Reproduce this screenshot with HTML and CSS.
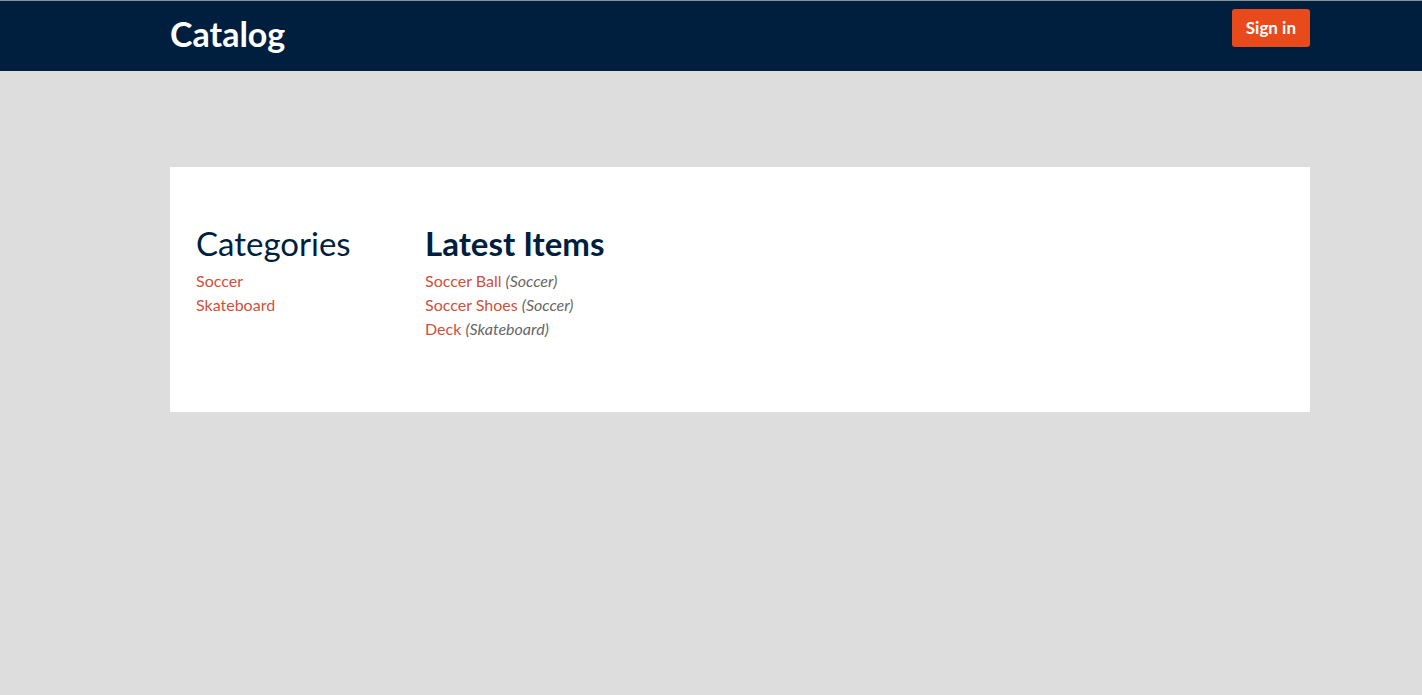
FILE: index.html
```html
<!DOCTYPE html>
<html>
<head>
<meta charset="utf-8">
<link rel="stylesheet" href="styles.css">
</head>
<body>
<header class="topbar">
  <div class="wrap bar-inner">
    <a class="brand" href="#">Catalog</a>
    <a class="btn-signin" href="#">Sign in</a>
  </div>
</header>
<main class="wrap">
  <section class="card">
    <div class="col cats">
      <h2 class="cat-title">Categories</h2>
      <a class="link" href="#">Soccer</a>
      <a class="link" href="#">Skateboard</a>
    </div>
    <div class="col items">
      <h2 class="items-title">Latest Items</h2>
      <div class="row"><a class="link" href="#">Soccer Ball</a> <em class="tag">(Soccer)</em></div>
      <div class="row"><a class="link" href="#">Soccer Shoes</a> <em class="tag">(Soccer)</em></div>
      <div class="row"><a class="link" href="#">Deck</a> <em class="tag">(Skateboard)</em></div>
    </div>
  </section>
</main>
</body>
</html>
```

FILE: styles.css
```css
* { box-sizing: border-box; }
html, body { margin: 0; padding: 0; }
body {
  background: #dddddd;
  font-family: Lato, "Open Sans", sans-serif;
  font-size: 16px;
  line-height: 24px;
}
.wrap { width: 1140px; margin-left: 170px; }
.topbar { background: #001f3f; height: 71px; border-top: 1px solid #8a9099; }
.bar-inner { display: flex; justify-content: space-between; align-items: flex-start; }
.brand {
  color: #fff; text-decoration: none; font-weight: 700; font-size: 34px;
  line-height: 40px; margin-top: 13px;
}
.btn-signin {
  margin-top: 8px; background: #e84a1b; color: #fff; text-decoration: none;
  font-weight: 700; font-size: 17px; line-height: 24px; padding: 7px 14px;
  border-radius: 3px;
}
main { padding-top: 96px; }
.card { background: #fff; display: flex; padding: 56px 26px 71px; }
.col { display: flex; flex-direction: column; align-items: flex-start; }
.cats { width: 229px; }
h2 { margin: 0 0 6px; color: #001f3f; font-size: 33px; line-height: 40px; }
.cat-title { font-weight: 400; }
.items-title { font-weight: 700; }
.link { color: #d0503c; text-decoration: none; }
.tag { color: #666; }
```
